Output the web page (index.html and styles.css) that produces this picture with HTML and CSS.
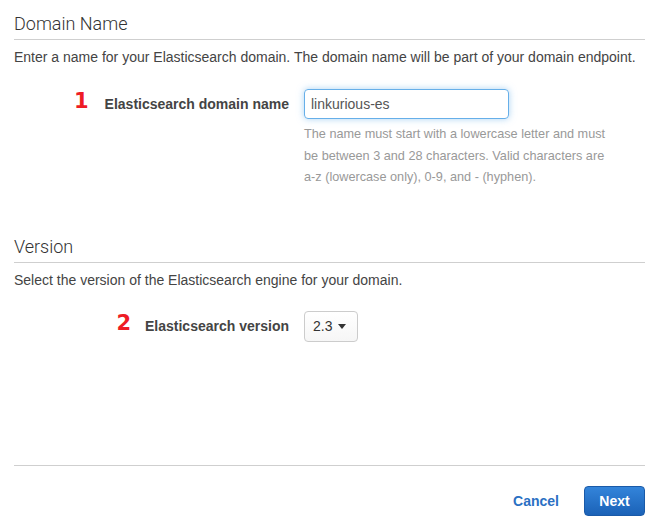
FILE: index.html
```html
<!DOCTYPE html>
<html>
<head>
<meta charset="utf-8">
<link rel="stylesheet" href="styles.css">
</head>
<body>
<div class="page">
  <section class="section">
    <h2 class="section-title">Domain Name</h2>
    <p class="section-desc">Enter a name for your Elasticsearch domain. The domain name will be part of your domain endpoint.</p>
    <div class="field field-domain">
      <div class="field-label"><span class="step">1</span><span class="label-text">Elasticsearch domain name</span></div>
      <div class="field-control">
        <div class="text-input">linkurious-es</div>
        <p class="help">The name must start with a lowercase letter and must be between 3 and 28 characters. Valid characters are a-z (lowercase only), 0-9, and - (hyphen).</p>
      </div>
    </div>
  </section>
  <section class="section section-version">
    <h2 class="section-title">Version</h2>
    <p class="section-desc">Select the version of the Elasticsearch engine for your domain.</p>
    <div class="field field-version">
      <div class="field-label"><span class="step">2</span><span class="label-text">Elasticsearch version</span></div>
      <div class="field-control">
        <div class="select">2.3<span class="caret"></span></div>
      </div>
    </div>
  </section>
  <footer class="footer">
    <span class="btn-link">Cancel</span>
    <span class="btn-primary">Next</span>
  </footer>
</div>
</body>
</html>
```
FILE: styles.css
```css
html, body {
  margin: 0;
  padding: 0;
  background: #fff;
}
body {
  font-family: "Liberation Sans", Arial, sans-serif;
  color: #444;
}
.page {
  padding: 13px 22px 0 14px;
}
.section-title {
  margin: 0;
  font-family: Roboto, "Liberation Sans", sans-serif;
  font-weight: 300;
  font-size: 18px;
  line-height: 22px;
  color: #333;
  padding-bottom: 4px;
  border-bottom: 1px solid #cfcfcf;
}
.section-desc {
  margin: 8px 0 0;
  font-size: 14px;
  line-height: 18px;
  color: #444;
}
.field {
  display: flex;
  align-items: flex-start;
  margin-top: 23px;
}
.field-label {
  width: 275px;
  flex: none;
  display: flex;
  justify-content: flex-end;
  align-items: center;
  gap: 16px;
  height: 30px;
}
.field-version .field-label {
  height: 31px;
  gap: 14px;
}
.label-text {
  font-weight: bold;
  font-size: 14px;
  color: #444;
}
.step {
  font-family: "DejaVu Sans", "Liberation Sans", sans-serif;
  font-weight: bold;
  font-size: 21px;
  color: #ee1c25;
  line-height: 1;
  margin-top: -6px;
}
.field-control {
  margin-left: 15px;
}
.text-input {
  box-sizing: border-box;
  width: 205px;
  height: 30px;
  border: 1px solid #66afe9;
  border-radius: 4px;
  box-shadow: 0 0 7px rgba(102, 175, 233, 0.55);
  padding: 0 6px;
  font-size: 14px;
  line-height: 28px;
  color: #555;
}
.help {
  margin: 5px 0 0;
  width: 315px;
  font-size: 12.7px;
  line-height: 21.5px;
  color: #999;
}
.section-version {
  margin-top: 47px;
}
.field-version {
  margin-top: 22px;
}
.select {
  box-sizing: border-box;
  width: 54px;
  height: 31px;
  border: 1px solid #ccc;
  border-radius: 4px;
  background: linear-gradient(#fff, #f6f6f6);
  padding: 0 8px;
  font-size: 14px;
  line-height: 31px;
  color: #333;
  display: flex;
  align-items: center;
  gap: 6px;
}
.caret {
  width: 0;
  height: 0;
  border-left: 4.5px solid transparent;
  border-right: 4.5px solid transparent;
  border-top: 5px solid #333;
}
.footer {
  margin-top: 123px;
  border-top: 1px solid #cfcfcf;
  padding-top: 20px;
  display: flex;
  justify-content: flex-end;
  align-items: center;
  gap: 25px;
}
.btn-link {
  font-weight: bold;
  font-size: 14px;
  color: #2a70c3;
}
.btn-primary {
  box-sizing: border-box;
  width: 61px;
  height: 30px;
  border: 1px solid #1a5aa8;
  border-radius: 4px;
  background: linear-gradient(#3384da, #1b62b7);
  color: #fff;
  font-weight: bold;
  font-size: 14px;
  display: flex;
  align-items: center;
  justify-content: center;
}
```
